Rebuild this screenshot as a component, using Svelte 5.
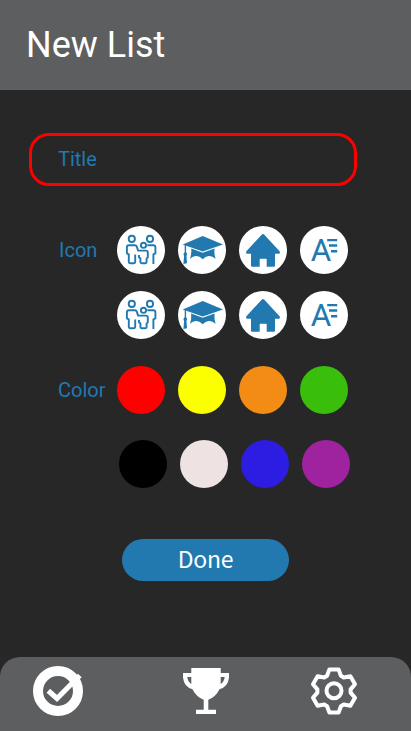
<script>
  const icons = ['family', 'cap', 'home', 'font'];
  const iconRows = [icons, icons];
  const brights = ['#ff0000', '#fbff00', '#f28c15', '#3abe0c'];
  const deeps = ['#000000', '#eee2e2', '#2d1de3', '#9f229f'];

  const tooth = [[-6.9, -15.2], [-4.6, -21.6], [4.6, -21.6], [6.9, -15.2]];
  const gear = [0, 1, 2, 3, 4, 5]
    .flatMap((n) => {
      const a = (n * Math.PI) / 3;
      return tooth.map(([x, y]) => [
        x * Math.cos(a) - y * Math.sin(a),
        x * Math.sin(a) + y * Math.cos(a)
      ]);
    })
    .map(([x, y]) => `${(25 + x).toFixed(2)},${(25 + y).toFixed(2)}`)
    .join(' ');
</script>

<div class="screen">
  <header><h1>New List</h1></header>

  <main>
    <div class="field">Title</div>

    <section class="group icons">
      <span class="label">Icon</span>
      <div class="rows">
        {#each iconRows as row}
          <div class="row">
            {#each row as icon}
              <button class="dot" aria-label={icon}>
                <svg viewBox="0 0 48 48" width="48" height="48">
                  {#if icon === 'family'}
                    <g class="line">
                      <circle cx="14.8" cy="12.9" r="3.1" />
                      <circle cx="33" cy="12.9" r="3.1" />
                      <circle cx="26.5" cy="19.3" r="2.6" />
                      <path d="M18.200 28.500V36a1.200 1.200 0 0 1-1.200 1.200h-4a1.200 1.200 0 0 1-1.200-1.200V28.300L9.900 27.300V21.200q0-2 2-2h6q1.400 0 1.900 1.400l1.300 4h7.800q1.900 0 1.900 1.700v5.200l-1.200.8V36a1.200 1.200 0 0 1-1.200 1.200h-3.800a1.200 1.200 0 0 1-1.200-1.200V32.200l-1.400-.8v-2.400" />
                      <path d="M30.300 19.200h6q2.100 0 2.100 2v6.200l-2 1V38" />
                    </g>
                  {:else if icon === 'cap'}
                    <g class="solid">
                      <path d="M24.700 10 45 18.400 24.700 25.600 4.700 18.400Z" />
                      <path d="M13.200 22.400 24.700 26.800 36.500 22.400Q36 28 37.600 32.800 34 29.700 30.600 30.100 27.400 30.500 24.700 33.300 22 30.500 18.800 30.100 15.200 29.700 12 32.800 13.700 28 13.200 22.400Z" />
                      <path d="M6.700 19h1.400v7l1 2-.6 2 .5 7.200-3.600.7.700-8-.7-2 1.300-2Z" />
                    </g>
                  {:else if icon === 'home'}
                    <path class="solid" d="M22.900 8.400q1.100-.9 2.200 0L40.600 25.300q1 2.400-.9 2.500H36V39.500q0 1.200-1.200 1.200h-7.100V33.500q0-.8-.8-.8h-5.400q-.8 0-.8.800v7.200h-7.500Q12 40.700 12 39.500V27.800H8.300q-1.900-.1-.9-2.500Z" />
                  {:else}
                    <text x="10.800" y="35.100">A</text>
                    <path class="solid" d="M27.200 12.900H37.200v2.300H27.200ZM29 18.300h8.200v2.400H29ZM31 24h6.200v2.400h-6.200Z" />
                  {/if}
                </svg>
              </button>
            {/each}
          </div>
        {/each}
      </div>
    </section>

    <section class="group colors">
      <span class="label">Color</span>
      <div class="rows">
        <div class="row">
          {#each brights as c}<button class="dot" aria-label={c} style="background:{c}"></button>{/each}
        </div>
        <div class="row second">
          {#each deeps as c}<button class="dot" aria-label={c} style="background:{c}"></button>{/each}
        </div>
      </div>
    </section>

    <button class="done">Done</button>
  </main>

  <nav>
    <svg viewBox="0 0 50 50" width="50" height="50">
      <circle cx="25" cy="25" r="20" fill="none" stroke="#fff" stroke-width="10" />
      <path d="M15.300 24.700 24 32.500 46.800 9.500" fill="none" stroke="#fff" stroke-width="5.200" />
    </svg>
    <svg class="trophy" viewBox="0 0 50 50" width="50" height="50">
      <path fill="#fff" fill-rule="evenodd" d="M10.300 2h29.400v5H48v4.500Q47 21 38.500 23.200 35 30.500 27.300 33.800V43.700H35V48H15V43.700h7.700V33.800Q15 30.500 11.500 23.200 3 21 2 11.500V7h8.300ZM6.300 11Q6.700 15.500 10.300 18V11ZM43.700 11H39.700V18Q43.300 15.500 43.700 11Z" />
    </svg>
    <svg viewBox="0 0 50 50" width="50" height="50" fill="none" stroke="#fff" stroke-linejoin="round">
      <polygon points={gear} stroke-width="4" />
      <circle cx="25" cy="24.700" r="7.500" stroke-width="4" />
    </svg>
  </nav>
</div>

<style>
  :global(body) { margin: 0; }
  .screen {
    width: 411px;
    height: 731px;
    display: flex;
    flex-direction: column;
    overflow: hidden;
    background: #272727;
    font-family: Roboto, sans-serif;
  }
  header {
    height: 90px;
    box-sizing: border-box;
    padding-left: 26px;
    display: flex;
    align-items: center;
    background: #5d5e60;
  }
  h1 { margin: 0; font-size: 36px; line-height: 42px; font-weight: 400; color: #fff; }
  main { flex: 1; display: flex; flex-direction: column; }
  .field {
    box-sizing: border-box;
    width: 328px;
    height: 53px;
    margin: 43px 0 0 29px;
    padding-left: 26px;
    border: 3px solid #f00;
    border-radius: 20px;
    font-size: 20px;
    line-height: 47px;
    color: #2279b0;
  }
  .group { display: flex; padding-left: 58px; }
  .label { width: 59px; font-size: 20px; line-height: 48px; color: #2279b0; }
  .icons { margin-top: 40px; }
  .icons .label { box-sizing: border-box; padding-left: 1px; }
  .colors { margin-top: 27px; }
  .rows { display: flex; flex-direction: column; }
  .icons .rows { gap: 17px; }
  .colors .rows { gap: 26px; }
  .row { display: flex; gap: 13px; }
  .second { padding-left: 2px; }
  .dot {
    width: 48px;
    height: 48px;
    padding: 0;
    border: 0;
    border-radius: 50%;
    background: #fff;
  }
  .dot svg, nav svg { display: block; }
  .line { fill: none; stroke: #2279b0; stroke-width: 1.9; stroke-linejoin: round; }
  .solid { fill: #2279b0; }
  text { fill: #2279b0; font: 31.400px Roboto, sans-serif; }
  .done {
    width: 167px;
    height: 42px;
    margin: 51px 0 0 122px;
    padding: 0 0 4px;
    border: 0;
    border-radius: 21px;
    background: #2279b0;
    color: #fff;
    font: 23px/38px "Noto Sans CJK SC", sans-serif;
    letter-spacing: -0.2px;
  }
  nav {
    box-sizing: border-box;
    height: 74px;
    padding: 9px 0 0 33px;
    display: flex;
    align-items: flex-start;
    background: #5d5e60;
    border-radius: 20px 20px 0 0;
  }
  .trophy { margin: 0 78px 0 98px; }
</style>
